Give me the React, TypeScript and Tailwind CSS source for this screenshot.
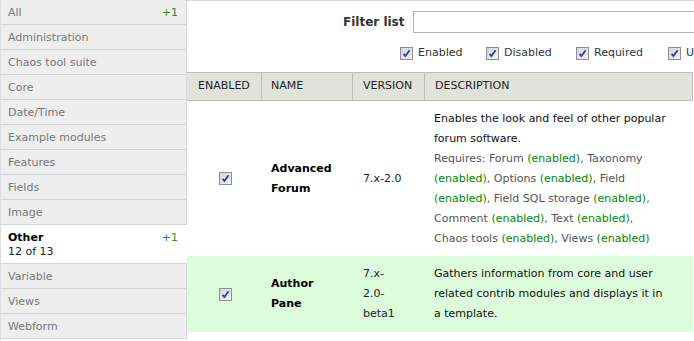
import React from 'react'

const categories = [
  'All',
  'Administration',
  'Chaos tool suite',
  'Core',
  'Date/Time',
  'Example modules',
  'Features',
  'Fields',
  'Image',
  'Other',
  'Variable',
  'Views',
  'Webform',
]

const filters = [
  { label: 'Enabled', w: 'w-[86px]' },
  { label: 'Disabled', w: 'w-[90px]' },
  { label: 'Required', w: 'w-[92px]' },
  { label: 'Unavailable', w: 'w-[100px]' },
]

function Box() {
  return (
    <span className="inline-flex h-[13px] w-[13px] shrink-0 items-center justify-center border border-[#8d8f91] bg-gradient-to-br from-[#d4d6d9] to-[#f4f4f4]">
      <svg width="9" height="9" viewBox="0 0 9 9">
        <path d="M1.5 4.8 L3.4 7 L7.6 1.2" fill="none" stroke="#2b3fae" strokeWidth="1.8" />
      </svg>
    </span>
  )
}

function En() {
  return <span className="text-[#080]">(enabled)</span>
}

export default function App() {
  return (
    <div className="flex h-[341px] w-[694px] overflow-hidden bg-white font-['DejaVu_Sans',sans-serif] text-[11px] text-[#333]">
      <ul className="w-[187px] shrink-0 border-l border-[#dde0e2]">
        {categories.map((c) =>
          c === 'Other' ? (
            <li key={c} className="flex h-[39px] justify-between border-b border-[#d4d8da] bg-white pl-[7px] pr-[9px] pt-[6px] leading-[14px]">
              <div>
                <div className="font-bold text-black">Other</div>
                <div className="text-[#222]">12 of 13</div>
              </div>
              <span className="text-[#2e8a2e]">+1</span>
            </li>
          ) : (
            <li key={c} className="flex h-[25px] items-center justify-between border-b border-r border-[#d4d8da] bg-[#eeeeee] pl-[7px] pr-[8px] pt-[3px] text-[#777]">
              <span>{c}</span>
              {c === 'All' && <span className="text-[#2e8a2e]">+1</span>}
            </li>
          )
        )}
      </ul>

      <div className="min-w-0 flex-1 border-t border-[#d9dde0]">
        <div className="flex h-[40px] items-center pl-[156px] pt-[2px]">
          <label className="mr-[8px] whitespace-nowrap text-[12px] font-bold text-[#333]">Filter list</label>
          <input className="h-[22px] w-[320px] shrink-0 border border-[#b6b6b6]" />
        </div>
        <div className="flex h-[24px] items-center whitespace-nowrap pl-[213px] text-[#333]">
          {filters.map((f) => (
            <span key={f.label} className={`flex shrink-0 items-center gap-[5px] ${f.w}`}>
              <Box />
              {f.label}
            </span>
          ))}
        </div>

        <div className="mt-[7px] w-[506px]">
          <div className="flex h-[29px] items-center border-y border-r border-[#bebfb9] bg-[#e1e2dc] uppercase text-[#222]">
            <div className="flex h-full w-[75px] items-center border-r border-[#bebfb9] pl-[11px]">Enabled</div>
            <div className="flex h-full w-[91px] items-center border-r border-[#bebfb9] pl-[9px]">Name</div>
            <div className="flex h-full w-[72px] items-center border-r border-[#bebfb9] pl-[10px]">Version</div>
            <div className="flex h-full flex-1 items-center pl-[10px]">Description</div>
          </div>

          <div className="flex h-[155px] items-center leading-[20px]">
            <div className="flex w-[75px] justify-center pl-[1px]"><Box /></div>
            <div className="w-[91px] pl-[9px] font-bold text-black">Advanced<br />Forum</div>
            <div className="w-[72px] pl-[10px] text-[#222]">7.x-2.0</div>
            <div className="flex-1 whitespace-nowrap pl-[9px]">
              <div className="text-[#111]">Enables the look and feel of other popular</div>
              <div className="text-[#111]">forum software.</div>
              <div className="text-[#555]">Requires: Forum <En />, Taxonomy</div>
              <div className="text-[#555]"><En />, Options <En />, Field</div>
              <div className="text-[#555]"><En />, Field SQL storage <En />,</div>
              <div className="text-[#555]">Comment <En />, Text <En />,</div>
              <div className="text-[#555]">Chaos tools <En />, Views <En /></div>
            </div>
          </div>

          <div className="flex h-[76px] items-center bg-[#ddfcdc] leading-[20px]">
            <div className="flex w-[75px] justify-center pl-[1px]"><Box /></div>
            <div className="w-[91px] pl-[9px] font-bold text-black">Author<br />Pane</div>
            <div className="w-[72px] pl-[10px] text-[#222]">7.x-<br />2.0-<br />beta1</div>
            <div className="flex-1 whitespace-nowrap pl-[9px] text-[#111]">
              <div>Gathers information from core and user</div>
              <div>related contrib modules and displays it in</div>
              <div>a template.</div>
            </div>
          </div>
        </div>
      </div>
    </div>
  )
}
